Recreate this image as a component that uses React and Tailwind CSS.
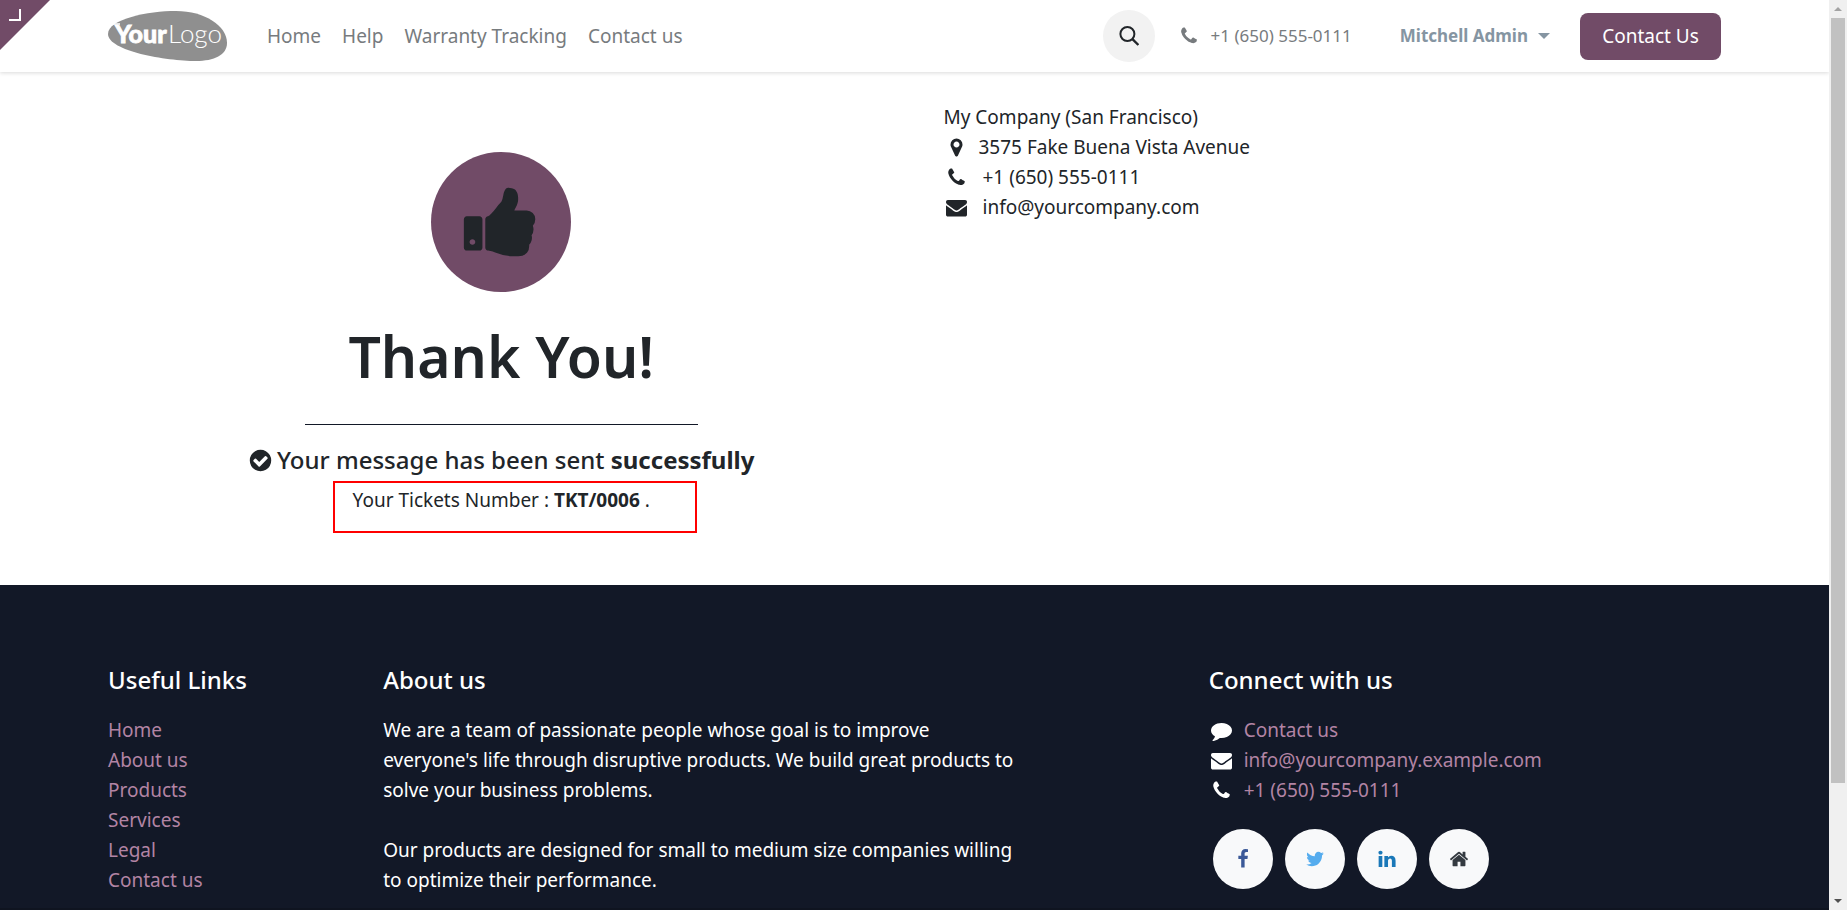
const ICONS = {
  phone:
    "M1600 1240q0 27-10 70.5t-21 68.5q-21 50-122 106-94 51-186 51-27 0-53-3.5t-57-12.5-47-14.5-55.5-20.5-49.5-18q-98-35-175-83-127-79-264-216t-216-264q-48-77-83-175-3-9-18-49.5t-20.5-55.5-14.5-47-12.5-57-3.5-53q0-92 51-186 56-101 106-122 25-11 68.5-21t70.5-10q14 0 21 3 18 6 53 76 11 19 30 54t35 63.5 31 53.5q3 4 17.5 25t21.5 35.5 7 28.5q0 20-28.5 50t-62 55-62 53-28.5 46q0 9 5 22.5t8.5 20.5 14 24 11.5 19q76 137 174 235t235 174q2 1 19 11.5t24 14 20.5 8.5 22.5 5q18 0 46-28.5t53-62 55-62 50-28.5q14 0 28.5 7t35.5 21.5 25 17.5q25 15 53.5 31t63.5 35 54 30q70 35 76 53 3 7 3 21z",
  envelope:
    "M1792 710v794q0 66-47 113t-113 47h-1472q-66 0-113-47t-47-113v-794q44 49 101 87 362 246 497 345 57 42 92.5 65.5t94.5 48 110 24.5h2q51 0 110-24.5t94.5-48 92.5-65.5q170-123 498-345 57-39 100-87zm0-294q0 79-49 151t-122 123q-376 261-468 325-10 7-42.5 31t-54 38.5-52 32.5-57.5 27-50 9h-2q-23 0-50-9t-57.5-27-52-32.5-54-38.5-42.5-31q-91-64-262-182.5t-205-142.5q-62-42-117-115.5t-55-136.5q0-78 41.5-130t118.5-52h1472q65 0 112.5 47t47.5 113z",
  marker:
    "M1152 640q0-106-75-181t-181-75-181 75-75 181 75 181 181 75 181-75 75-181zm256 0q0 109-33 179l-364 774q-16 33-47.5 52t-67.5 19-67.5-19-46.5-52l-365-774q-33-70-33-179 0-212 150-362t362-150 362 150 150 362z",
  comment:
    "M1792 896q0 174-120 321.5t-326 233-450 85.5q-70 0-145-8-198 175-460 242-49 14-114 22-17 2-30.5-9t-17.5-29v-1q-3-4-.5-12t2-10 4.5-9.5l6-9 7-8.5 8-9q7-8 31-34.5t34.5-38 31-39.5 32.5-51 27-59 26-76q-157-89-247.5-220t-90.5-281q0-130 71-248.5t191-204.5 286-136.5 348-50.5q244 0 450 85.5t326 233 120 321.5z",
  facebook:
    "M1343 12v264h-157q-86 0-116 36t-30 108v189h293l-39 296h-254v759h-306v-759h-255v-296h255v-218q0-186 104-288.5t277-102.5q147 0 228 12z",
  twitter:
    "M1684 408q-67 98-162 167 1 14 1 42 0 130-38 259.5t-115.5 248.5-184.5 210.5-258 146-323 54.5q-271 0-496-145 35 4 78 4 225 0 401-138-105-2-188-64.5t-114-159.5q33 5 61 5 43 0 85-11-112-23-185.5-111.5t-73.5-205.5v-4q68 38 146 41-66-44-105-115t-39-154q0-88 44-163 121 149 294.5 238.5t371.5 99.5q-8-38-8-74 0-134 94.5-228.5t228.5-94.5q140 0 236 102 109-21 205-78-37 115-142 178 93-10 186-50z",
  linkedin:
    "M477 625v991h-330v-991h330zm21-306q1 73-50.5 122t-135.5 49h-2q-82 0-132-49t-50-122q0-74 51.5-122.5t134.5-48.5 133 48.5 51 122.5zm1166 729v568h-329v-530q0-105-40.5-164.5t-126.5-59.5q-63 0-105.5 34.5t-63.5 85.5q-11 30-11 81v553h-329q2-399 2-647t-1-296l-1-48h329v144h-2q20-32 41-56t56.5-52 87-43.5 114.5-15.5q171 0 275 113.5t104 332.5z",
  home:
    "M1472 992v480q0 26-19 45t-45 19h-384v-384h-256v384h-384q-26 0-45-19t-19-45v-480q0-1 .5-3t.5-3l575-474 575 474q1 2 1 6zm223-69l-62 74q-8 9-21 11h-3q-13 0-21-7l-692-577-692 577q-12 8-24 7-13-2-21-11l-62-74q-8-10-7-23.5t11-21.5l719-599q32-26 76-26t76 26l244 204v-195q0-14 9-23t23-9h192q14 0 23 9t9 23v408l219 182q10 8 11 21.5t-7 23.5z",
  check:
    "M1412 734q0-28-18-46l-91-90q-19-19-45-19t-45 19l-408 407-226-226q-19-19-45-19t-45 19l-91 90q-18 18-18 46 0 27 18 45l362 362q19 19 45 19 27 0 46-19l543-543q18-18 18-45zm252 162q0 209-103 385.5t-279.5 279.5-385.5 103-385.5-103-279.5-279.5-103-385.5 103-385.5 279.5-279.5 385.5-103 385.5 103 279.5 279.5 103 385.5z",
  thumb:
    "M320 1344q0-26-19-45t-45-19q-27 0-45.5 19t-18.5 45q0 27 18.5 45.5t45.5 18.5q26 0 45-18.5t19-45.5zm160-512v640q0 26-19 45t-45 19h-288q-26 0-45-19t-19-45v-640q0-26 19-45t45-19h288q26 0 45 19t19 45zm1184 0q0 86-55 149 15 44 15 76 3 76-43 137 17 56 0 117-15 57-54 94 9 112-49 181-64 76-197 78h-129q-66 0-144-15.5t-121.5-29-120.5-39.5q-123-43-158-44-26-1-45-19.5t-19-44.5v-641q0-25 18-43.5t43-20.5q24-2 76-59t101-121q68-87 101-120 18-18 31-48t17.5-48.5 13.5-60.5q7-39 12.5-61t19.5-52 34-50q19-19 45-19 46 0 82.5 10.5t60 26 40 40.5 24 45 12 50 5 45 .5 39q0 38-9.5 76t-19 60-27.5 56q-3 6-10 18t-11 22-8 24h277q78 0 135 57t57 135z",
};

function Icon({ name, className }) {
  return (
    <svg viewBox="0 0 1792 1792" fill="currentColor" aria-hidden="true" className={className}>
      <path d={ICONS[name]} />
    </svg>
  );
}

function Logo() {
  return (
    <svg viewBox="0 0 119 50" className="h-[50px] w-[119px]" role="img" aria-label="Your Logo">
      <path
        d="M0 23C0 8 40 0 68 0C97 0 119 15 119 32C119 44 106 50 88 50C58 50 0 40 0 23z"
        fill="#8f8f8f"
      />
      <path d="M5 13H12" stroke="#fff" strokeWidth="1.5" />
      <text
        x="7"
        y="32"
        fontFamily="Lato, sans-serif"
        fontSize="25"
        fontWeight="900"
        fill="#fff"
        stroke="#fff"
        strokeWidth="0.8"
      >
        Your
      </text>
      <text x="60" y="32" fontFamily="Lato, sans-serif" fontSize="26" fontWeight="300" fill="#fff">
        Logo
      </text>
    </svg>
  );
}

const NAV = ["Home", "Help", "Warranty Tracking", "Contact us"];
const LINKS = ["Home", "About us", "Products", "Services", "Legal", "Contact us"];
const CONTACTS = [
  ["comment", "Contact us"],
  ["envelope", "info@yourcompany.example.com"],
  ["phone", "+1 (650) 555-0111"],
];
const SOCIAL = [
  ["facebook", "Facebook", "text-[#3b5998]"],
  ["twitter", "Twitter", "text-[#55acee]"],
  ["linkedin", "LinkedIn", "text-[#1a78b8]"],
  ["home", "Home page", "text-[#343a40]"],
];

function Header() {
  return (
    <header className="relative z-10 flex h-[72px] shrink-0 items-center bg-white px-[108px] text-[#777b7e] shadow-[0_1px_4px_rgba(0,0,0,0.15)]">
      <button type="button" aria-label="Open editor" className="absolute left-0 top-0">
        <svg viewBox="0 0 50 50" className="size-[50px]">
          <path d="M0 0H50L0 50z" fill="#714b67" />
          <path d="M9 20H20V9" fill="none" stroke="#fff" strokeWidth="2" />
        </svg>
      </button>
      <a href="#home">
        <Logo />
      </a>
      <nav className="ml-10 flex gap-[21px]">
        {NAV.map((n) => (
          <a key={n} href="#nav">
            {n}
          </a>
        ))}
      </nav>
      <div className="ml-auto flex items-center">
        <button
          type="button"
          aria-label="Search"
          className="flex size-[52px] items-center justify-center rounded-full bg-[#f2f2f2] text-[#212529]"
        >
          <svg viewBox="0 0 20 20" className="size-5" fill="none" stroke="currentColor" strokeWidth="2">
            <circle cx="8.4" cy="8" r="7" />
            <path d="M13.2 12.8L19.4 19" strokeWidth="2.4" />
          </svg>
        </button>
        <a href="tel:+16505550111" className="ml-6 flex items-center gap-3 text-[17px]">
          <Icon name="phone" className="size-5" />
          +1 (650) 555-0111
        </a>
        <button type="button" className="ml-12 flex items-center gap-[10px] text-[17px] font-bold text-[#8595a2]">
          Mitchell Admin
          <span className="border-x-6 border-t-6 border-x-transparent border-t-current" />
        </button>
        <button type="button" className="ml-[30px] h-[47px] w-[141px] rounded-lg bg-[#714b67] text-white">
          Contact Us
        </button>
      </div>
    </header>
  );
}

function Main() {
  return (
    <main className="grid h-[513px] shrink-0 grid-cols-2 px-[88px] text-[#212529]">
      <section className="flex flex-col items-center px-5 pt-20">
        <div className="flex size-[140px] items-center justify-center rounded-full bg-[#714b67]">
          <Icon name="thumb" className="size-20" />
        </div>
        <h1 className="mt-7 text-[57px] font-semibold leading-[72px]">Thank You!</h1>
        <hr className="mt-8 w-1/2 border-[#121827]" />
        <h2 className="mt-5 flex items-center gap-1 text-2xl font-medium leading-[30px]">
          <Icon name="check" className="size-[25px]" />
          <span>
            Your message has been sent <b>successfully</b>
          </span>
        </h2>
        <div className="relative mt-[10px] leading-[30px]">
          Your Tickets Number : <b>TKT/0006</b> .
          <div className="absolute -left-5 -top-1 h-[52px] w-[364px] border-2 border-[#ff0000]" />
        </div>
      </section>
      <address className="px-[29px] pt-[30px] not-italic leading-[30px]">
        <p>My Company (San Francisco)</p>
        <p className="flex items-center gap-3">
          <Icon name="marker" className="ml-[2px] size-[21px]" />
          3575 Fake Buena Vista Avenue
        </p>
        <p className="flex items-center gap-4">
          <Icon name="phone" className="ml-[2px] size-[21px]" />
          +1 (650) 555-0111
        </p>
        <p className="flex items-center gap-4">
          <Icon name="envelope" className="ml-[2px] size-[21px]" />
          info@yourcompany.com
        </p>
      </address>
    </main>
  );
}

function Footer() {
  return (
    <footer className="shrink-0 bg-[#121827] text-white">
      <div className="grid h-[323px] grid-cols-12 pl-[88px] pr-[90px] pt-20 leading-[30px]">
        <section className="col-span-2 px-5">
          <h3 className="mb-5 text-2xl font-medium leading-[30px]">Useful Links</h3>
          <ul className="text-[#b284a4]">
            {LINKS.map((l) => (
              <li key={l}>
                <a href="#link">{l}</a>
              </li>
            ))}
          </ul>
        </section>
        <section className="col-span-5 pl-5 pr-7">
          <h3 className="mb-5 text-2xl font-medium leading-[30px]">About us</h3>
          <p>
            We are a team of passionate people whose goal is to improve everyone's life through
            disruptive products. We build great products to solve your business problems.
          </p>
          <p className="mt-[30px]">
            Our products are designed for small to medium size companies willing to optimize their
            performance.
          </p>
        </section>
        <section className="col-span-4 col-start-9 px-5">
          <h3 className="mb-5 text-2xl font-medium leading-[30px]">Connect with us</h3>
          <ul>
            {CONTACTS.map(([icon, label]) => (
              <li key={label} className="flex items-center gap-3">
                <Icon name={icon} className="ml-[2px] size-[21px]" />
                <a href="#contact" className="text-[#b284a4]">
                  {label}
                </a>
              </li>
            ))}
          </ul>
          <div className="ml-1 mt-6 flex gap-3">
            {SOCIAL.map(([icon, label, color]) => (
              <a
                key={icon}
                href="#social"
                aria-label={label}
                className={`flex size-[60px] items-center justify-center rounded-full bg-[#f8f9fa] ${color}`}
              >
                <Icon name={icon} className="size-5" />
              </a>
            ))}
          </div>
        </section>
      </div>
      <div className="h-20 bg-[#0f1420]" />
    </footer>
  );
}

function Scrollbar() {
  return (
    <div className="flex w-[18px] shrink-0 flex-col items-center bg-[#f0f0f0]" aria-hidden="true">
      <div className="flex h-[18px] items-center">
        <span className="border-x-4 border-b-4 border-x-transparent border-b-[#a3a3a3]" />
      </div>
      <div className="w-[14px] grow-7 bg-[#c1c1c1]" />
      <div className="grow" />
      <div className="flex h-[18px] items-center">
        <span className="border-x-4 border-t-4 border-x-transparent border-t-[#505050]" />
      </div>
    </div>
  );
}

export default function App() {
  return (
    <div className="flex h-screen overflow-hidden bg-white font-['Noto_Sans',sans-serif] text-[19px]">
      <div className="flex min-w-0 flex-1 flex-col overflow-hidden">
        <Header />
        <Main />
        <Footer />
      </div>
      <Scrollbar />
    </div>
  );
}
